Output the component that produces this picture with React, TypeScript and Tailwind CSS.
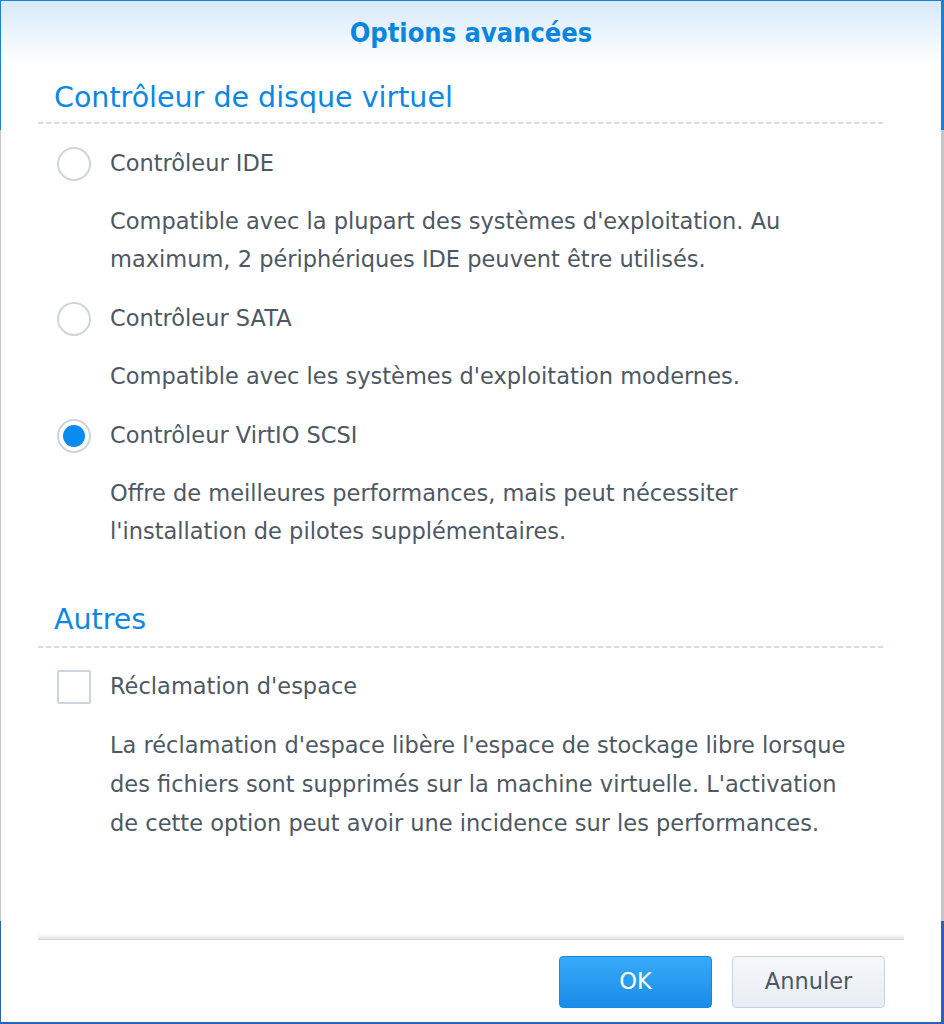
import React from "react";

const dashed =
  "h-[2px] bg-[repeating-linear-gradient(to_right,#d3dde8_0,#d3dde8_5px,transparent_5px,transparent_8px)]";

function Radio({ checked }: { checked?: boolean }) {
  return (
    <span className="w-[34px] h-[34px] rounded-full border-2 border-[#cdd5dd] bg-white flex items-center justify-center shrink-0">
      {checked && <span className="w-[22px] h-[22px] rounded-full bg-[#0b8bf0]" />}
    </span>
  );
}

function Option({
  label,
  checked,
  lines,
  first,
}: {
  label: string;
  checked?: boolean;
  lines: string[];
  first?: boolean;
}) {
  return (
    <div className={first ? "mt-[20px]" : "mt-[21px]"}>
      <label className="h-[40px] flex items-center gap-[19px] pl-[19px]">
        <Radio checked={checked} />
        <span>{label}</span>
      </label>
      <p className="mt-[18px] pl-[72px] leading-[38px]">
        {lines.map((l) => (
          <span key={l} className="block whitespace-nowrap">
            {l}
          </span>
        ))}
      </p>
    </div>
  );
}

export default function App() {
  return (
    <div className="w-[944px] h-[1024px] pl-[1px] pt-[1px] pr-[3px] pb-[2px] bg-[linear-gradient(to_bottom,#1c80d4_0,#1c80d4_130px,#c6c6c6_130px,#c6c6c6_921px,#2a62b6_921px)]">
      <div
        className="h-full bg-white flex flex-col text-[22.5px] text-[#4d5863]"
        style={{ fontFamily: '"DejaVu Sans", Verdana, sans-serif' }}
      >
        {/* Header */}
        <div className="h-[64px] shrink-0 flex items-center justify-center bg-gradient-to-b from-[#d7e9fa] to-white">
          <h1
            className="text-[27px] font-bold text-[#0a86e0]"
            style={{ fontFamily: '"DejaVu Sans Condensed", "DejaVu Sans", sans-serif' }}
          >
            Options avancées
          </h1>
        </div>

        {/* Body */}
        <div className="flex-1 pl-[37px] pr-[55px]">
          <h2 className="mt-[13px] h-[40px] flex items-center pl-[16px] text-[28.5px] text-[#0c87e2]">
            Contrôleur de disque virtuel
          </h2>
          <div className={`mt-[4px] ${dashed}`} />

          <Option
            first
            label="Contrôleur IDE"
            lines={[
              "Compatible avec la plupart des systèmes d'exploitation. Au",
              "maximum, 2 périphériques IDE peuvent être utilisés.",
            ]}
          />
          <Option
            label="Contrôleur SATA"
            lines={["Compatible avec les systèmes d'exploitation modernes."]}
          />
          <Option
            checked
            label="Contrôleur VirtIO SCSI"
            lines={[
              "Offre de meilleures performances, mais peut nécessiter",
              "l'installation de pilotes supplémentaires.",
            ]}
          />

          <h2 className="mt-[50px] h-[40px] flex items-center pl-[16px] text-[28.5px] text-[#0c87e2]">
            Autres
          </h2>
          <div className={`mt-[6px] ${dashed}`} />

          <label className="mt-[19px] h-[40px] flex items-center gap-[19px] pl-[19px]">
            <span className="w-[34px] h-[34px] border-2 border-[#ccd5de] rounded-[2px] bg-white shrink-0" />
            <span>Réclamation d'espace</span>
          </label>
          <p className="mt-[19px] pl-[72px] leading-[39px]">
            <span className="block whitespace-nowrap">
              La réclamation d'espace libère l'espace de stockage libre lorsque
            </span>
            <span className="block whitespace-nowrap">
              des fichiers sont supprimés sur la machine virtuelle. L'activation
            </span>
            <span className="block whitespace-nowrap">
              de cette option peut avoir une incidence sur les performances.
            </span>
          </p>
        </div>

        {/* Footer */}
        <div className="shrink-0 pl-[37px] pr-[37px] pb-[14px]">
          <div className="h-[6px] bg-gradient-to-b from-white to-[#e4e4e4] border-b border-[#d6d6d6]" />
          <div className="mt-[16px] flex justify-end gap-[20px] pr-[19px]">
            <button className="w-[153px] h-[52px] rounded-[4px] border border-[#1a86dc] bg-gradient-to-b from-[#36aafa] to-[#1a8ce8] text-white text-[22.5px]">
              OK
            </button>
            <button className="w-[153px] h-[52px] rounded-[4px] border border-[#c9d3dd] bg-gradient-to-b from-[#f5f8fb] to-[#e8edf3] text-[#4d5863] text-[22.5px]">
              Annuler
            </button>
          </div>
        </div>
      </div>
    </div>
  );
}
